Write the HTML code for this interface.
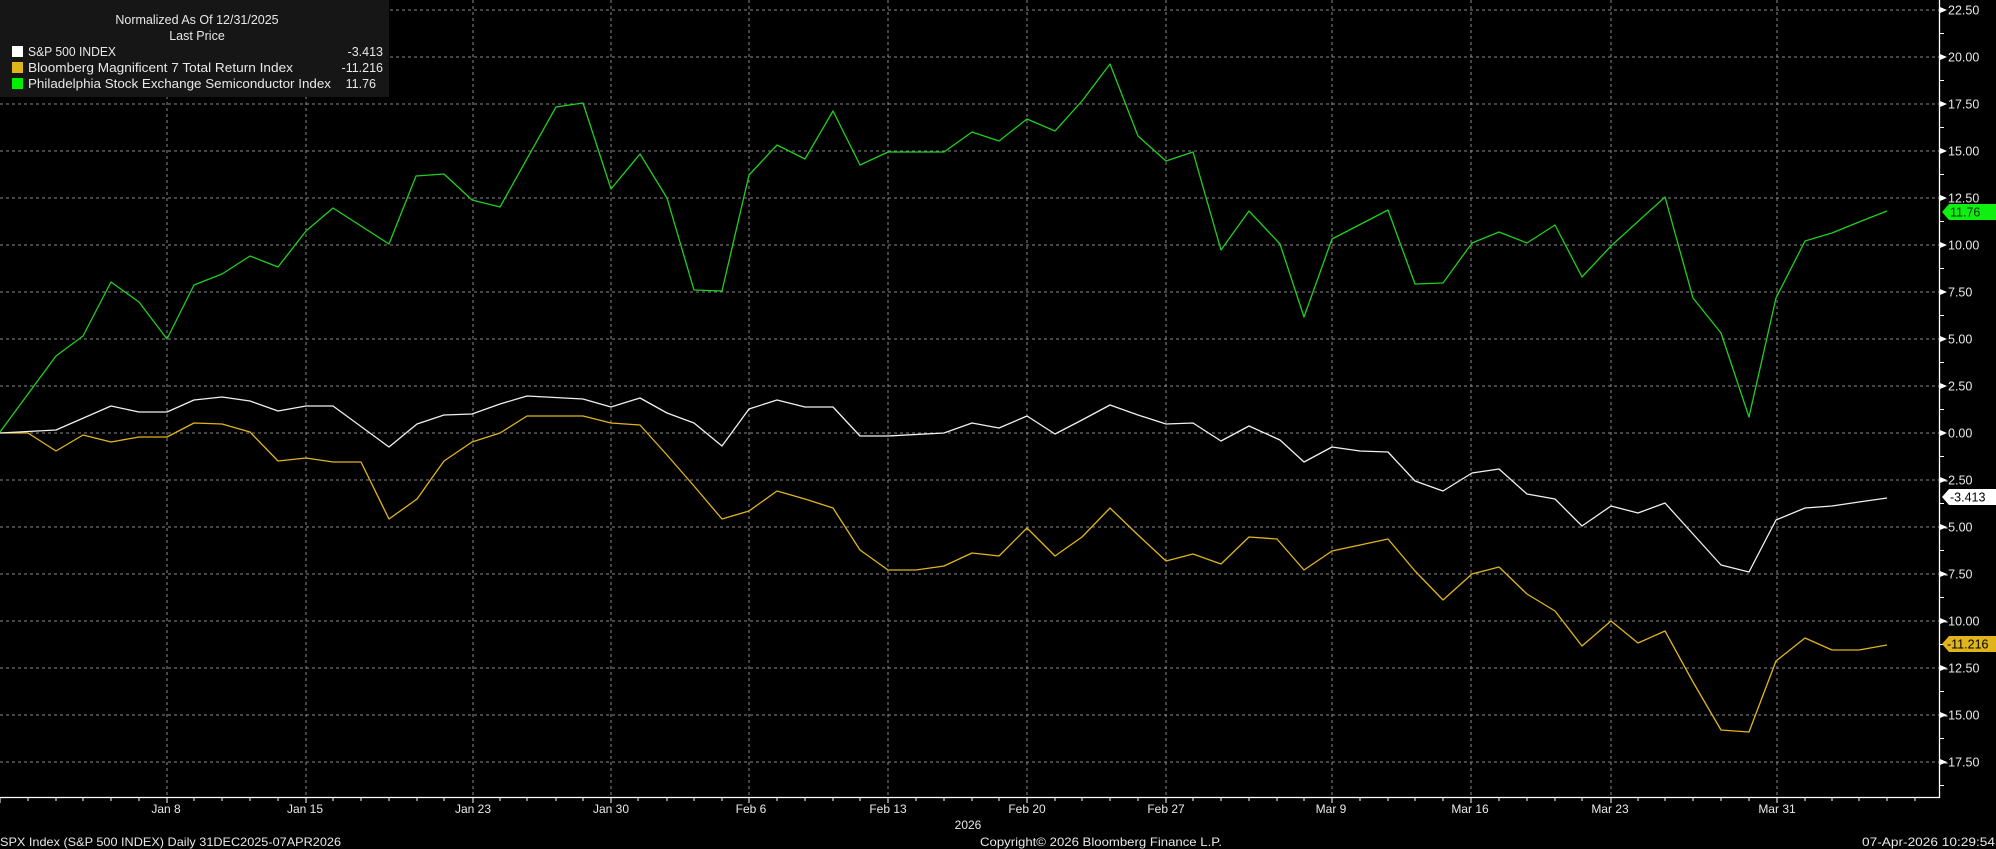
<!DOCTYPE html>
<html><head><meta charset="utf-8"><style>
html,body{margin:0;padding:0;background:#000;width:1996px;height:849px;overflow:hidden}
svg{display:block}
text{font-family:"Liberation Sans",sans-serif;fill:#e8e8e8}
</style></head><body>
<svg width="1996" height="849" viewBox="0 0 1996 849" xmlns="http://www.w3.org/2000/svg">
<rect width="1996" height="849" fill="#000"/>
<g stroke="#8a8a8a" stroke-width="1" stroke-dasharray="3,3" fill="none">
<path d="M0 10H1939M0 57H1939M0 104H1939M0 151H1939M0 198H1939M0 245H1939M0 292H1939M0 339H1939M0 386H1939M0 433H1939M0 480H1939M0 527H1939M0 574H1939M0 621H1939M0 668H1939M0 715H1939M0 762H1939"/>
<path d="M167 0V797M306 0V797M473 0V797M611 0V797M749 0V797M888 0V797M1027 0V797M1166 0V797M1332 0V797M1471 0V797M1611 0V797M1777 0V797"/>
</g>
<rect x="0" y="0" width="389" height="97" fill="#161616"/>
<text x="197" y="24" font-size="12.5" text-anchor="middle">Normalized As Of 12/31/2025</text>
<text x="197" y="40" font-size="12.5" text-anchor="middle">Last Price</text>
<rect x="12" y="46" width="11" height="11" fill="#fff"/>
<rect x="12" y="62" width="11" height="11" fill="#e0b51c"/>
<rect x="12" y="78" width="11" height="11" fill="#00f000"/>
<text x="28" y="56" font-size="12.5" textLength="88" lengthAdjust="spacingAndGlyphs">S&amp;P 500 INDEX</text>
<text x="28" y="72" font-size="12.5" textLength="265" lengthAdjust="spacingAndGlyphs">Bloomberg Magnificent 7 Total Return Index</text>
<text x="28" y="88" font-size="12.5" textLength="303" lengthAdjust="spacingAndGlyphs">Philadelphia Stock Exchange Semiconductor Index</text>
<text x="383" y="56" font-size="12.5" text-anchor="end">-3.413</text>
<text x="383" y="72" font-size="12.5" text-anchor="end">-11.216</text>
<text x="376" y="88" font-size="12.5" text-anchor="end">11.76</text>
<g fill="none" stroke-width="1.3" stroke-linejoin="round">
<polyline stroke="#e0b51c" points="0,433 28,433 56,451 83,435 111,442 139,437 167,437 194,423 222,424 250,432 278,461 306,458 333,462 361,462 389,519 417,499 444,461 472,442 500,433 527,416 583,416 611,423 640,425 667,455 694,486 722,519 749,511 777,491 805,499 833,508 860,550 888,570 916,570 944,566 972,553 999,556 1027,528 1055,556 1082,537 1110,508 1138,535 1166,561 1193,554 1221,564 1249,537 1277,539 1304,570 1332,551 1360,545 1388,539 1415,571 1443,600 1472,574 1499,567 1527,594 1555,611 1582,646 1611,621 1638,643 1665,631 1693,682 1721,730 1749,732 1776,661 1805,638 1832,650 1859,650 1887,645"/>
<polyline stroke="#f0f0f0" points="0,433 56,430 111,406 139,412 167,412 194,400 222,397 250,401 278,411 306,406 333,406 389,447 417,424 444,415 472,414 500,404 527,396 583,399 611,407 640,398 667,413 694,423 722,446 749,409 777,400 805,407 833,407 860,436 888,436 944,433 972,423 999,428 1027,416 1055,434 1082,420 1110,405 1138,415 1166,424 1193,423 1221,441 1249,426 1280,440 1304,462 1332,447 1360,451 1388,452 1415,481 1443,491 1472,473 1499,469 1527,494 1555,499 1582,526 1611,506 1638,513 1665,503 1693,534 1721,565 1749,572 1776,520 1805,508 1832,506 1859,502 1887,498"/>
<polyline stroke="#1ed01e" points="0,432 56,356 83,336 111,282 139,302 167,339 194,285 222,274 250,256 278,267 306,231 333,208 389,244 416,176 444,174 472,200 500,207 556,107 583,103 611,189 640,154 667,198 694,290 722,291 749,175 777,145 805,159 833,111 860,165 888,152 944,152 972,132 999,141 1027,119 1055,131 1082,101 1110,64 1138,136 1166,161 1193,152 1221,250 1249,211 1280,244 1304,317 1332,239 1388,210 1415,284 1443,283 1472,243 1499,232 1527,243 1555,225 1582,277 1611,246 1665,197 1693,298 1721,333 1749,417 1776,298 1805,241 1832,233 1859,222 1887,211"/>
</g>
<g stroke="#fff" stroke-width="1.3">
<line x1="1939.5" y1="0" x2="1939.5" y2="798"/>
<line x1="0" y1="797.5" x2="1940" y2="797.5"/>
<path d="M1939 33.5H1944M1939 80.5H1944M1939 127.5H1944M1939 174.5H1944M1939 221.5H1944M1939 268.5H1944M1939 315.5H1944M1939 362.5H1944M1939 409.5H1944M1939 456.5H1944M1939 503.5H1944M1939 550.5H1944M1939 597.5H1944M1939 644.5H1944M1939 691.5H1944M1939 738.5H1944M1939 785.5H1944" stroke-width="1"/>
</g>
<g fill="#fff">
<path d="M1940 7l7 3l-7 3z M1940 54l7 3l-7 3z M1940 101l7 3l-7 3z M1940 148l7 3l-7 3z M1940 195l7 3l-7 3z M1940 242l7 3l-7 3z M1940 289l7 3l-7 3z M1940 336l7 3l-7 3z M1940 383l7 3l-7 3z M1940 430l7 3l-7 3z M1940 477l7 3l-7 3z M1940 524l7 3l-7 3z M1940 571l7 3l-7 3z M1940 618l7 3l-7 3z M1940 665l7 3l-7 3z M1940 712l7 3l-7 3z M1940 759l7 3l-7 3z"/>
</g>
<g font-size="12.5">
<text x="1948" y="14.5">22.50</text>
<text x="1948" y="61.5">20.00</text>
<text x="1948" y="108.5">17.50</text>
<text x="1948" y="155.5">15.00</text>
<text x="1948" y="202.5">12.50</text>
<text x="1948" y="249.5">10.00</text>
<text x="1948" y="296.5">7.50</text>
<text x="1948" y="343.5">5.00</text>
<text x="1948" y="390.5">2.50</text>
<text x="1948" y="437.5">0.00</text>
<text x="1944" y="484.5">-2.50</text>
<text x="1944" y="531.5">-5.00</text>
<text x="1944" y="578.5">-7.50</text>
<text x="1944" y="625.5">-10.00</text>
<text x="1944" y="672.5">-12.50</text>
<text x="1944" y="719.5">-15.00</text>
<text x="1944" y="766.5">-17.50</text>
</g>
<path d="M1942 212l7 -8h47v16h-47z" fill="#10f010"/>
<text x="1950" y="216.5" font-size="12.5" style="fill:#063006">11.76</text>
<path d="M1942 497l7 -8h47v16h-47z" fill="#fff"/>
<text x="1950" y="501.5" font-size="12.5" style="fill:#000">-3.413</text>
<path d="M1942 644l7 -8h47v16h-47z" fill="#e0b51c"/>
<text x="1947" y="648.5" font-size="12.5" style="fill:#000">-11.216</text>
<g stroke="#fff" stroke-width="1">
<path d="M0 798v5M28 798v3M56 798v3M83 798v3M111 798v3M139 798v3M167 798v5M194 798v3M222 798v3M250 798v3M278 798v3M306 798v5M333 798v3M361 798v3M389 798v3M417 798v3M444 798v3M473 798v5M500 798v3M527 798v3M556 798v3M583 798v3M611 798v5M638 798v3M667 798v3M694 798v3M722 798v3M749 798v5M777 798v3M805 798v3M833 798v3M860 798v3M888 798v5M916 798v3M944 798v3M972 798v3M999 798v3M1027 798v5M1055 798v3M1082 798v3M1110 798v3M1138 798v3M1166 798v5M1193 798v3M1221 798v3M1249 798v3M1277 798v3M1304 798v3M1332 798v5M1360 798v3M1388 798v3M1415 798v3M1443 798v3M1471 798v5M1499 798v3M1527 798v3M1555 798v3M1582 798v3M1611 798v5M1638 798v3M1665 798v3M1693 798v3M1721 798v3M1749 798v3M1777 798v5M1805 798v3M1832 798v3M1859 798v3M1887 798v3M1915 798v3"/>
</g>
<g font-size="12" text-anchor="middle">
<text x="166" y="813">Jan 8</text>
<text x="305" y="813">Jan 15</text>
<text x="473" y="813">Jan 23</text>
<text x="611" y="813">Jan 30</text>
<text x="751" y="813">Feb 6</text>
<text x="888" y="813">Feb 13</text>
<text x="1027" y="813">Feb 20</text>
<text x="1166" y="813">Feb 27</text>
<text x="1331" y="813">Mar 9</text>
<text x="1470" y="813">Mar 16</text>
<text x="1610" y="813">Mar 23</text>
<text x="1777" y="813">Mar 31</text>
<text x="968" y="829">2026</text>
</g>
<g font-size="12">
<text x="0" y="846" textLength="341" lengthAdjust="spacingAndGlyphs">SPX Index (S&amp;P 500 INDEX) Daily 31DEC2025-07APR2026</text>
<text x="980" y="846" textLength="242" lengthAdjust="spacingAndGlyphs">Copyright© 2026 Bloomberg Finance L.P.</text>
<text x="1862" y="846" textLength="133" lengthAdjust="spacingAndGlyphs">07-Apr-2026 10:29:54</text>
</g>
</svg>
</body></html>
